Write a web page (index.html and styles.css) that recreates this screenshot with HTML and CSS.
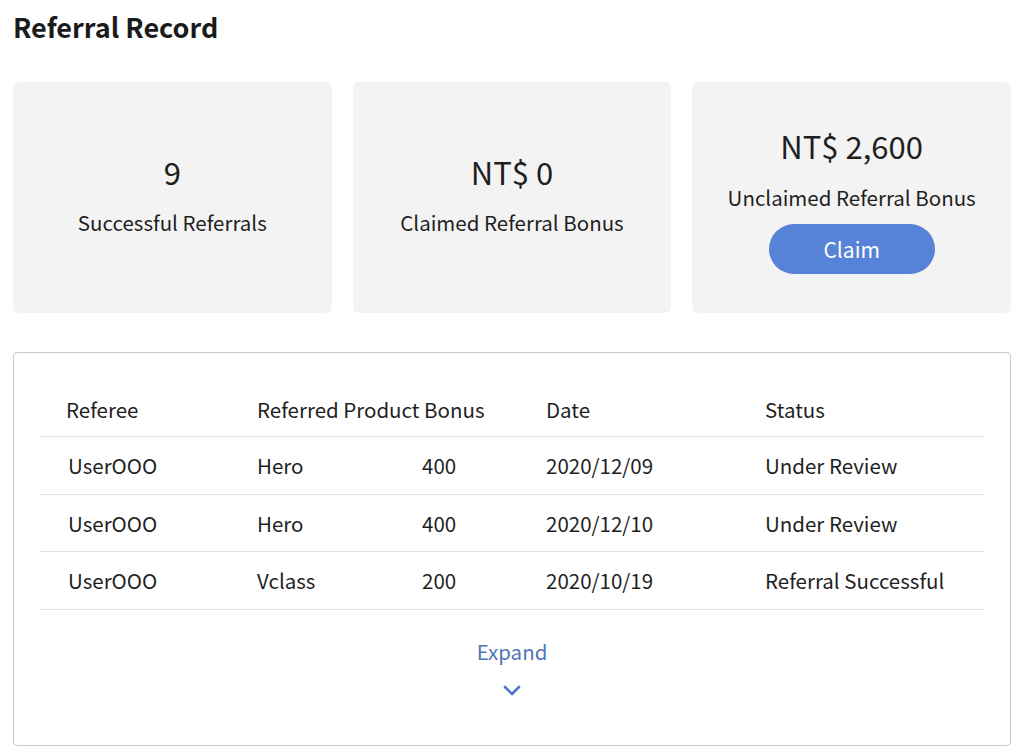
FILE: index.html
```html
<!DOCTYPE html>
<html lang="en">
<head>
  <meta charset="UTF-8" />
  <title>Referral Record</title>
  <link rel="stylesheet" href="styles.css">
</head>
<body>
  <div class="page">
    <h1 class="title">Referral Record</h1>

    <div class="stats">
      <div class="stat-card">
        <div class="stat-value">9</div>
        <div class="stat-label">Successful Referrals</div>
      </div>
      <div class="stat-card">
        <div class="stat-value">NT$ 0</div>
        <div class="stat-label">Claimed Referral Bonus</div>
      </div>
      <div class="stat-card unclaimed">
        <div class="stat-value">NT$ 2,600</div>
        <div class="stat-label">Unclaimed Referral Bonus</div>
        <button class="claim-btn">Claim</button>
      </div>
    </div>

    <div class="record-box">
      <div class="record-table">
        <div class="row head">
          <div>Referee</div>
          <div class="product-head">Referred Product Bonus</div>
          <div>Date</div>
          <div>Status</div>
        </div>
        <div class="row">
          <div class="user">UserOOO</div>
          <div>Hero</div>
          <div>400</div>
          <div>2020/12/09</div>
          <div>Under Review</div>
        </div>
        <div class="row">
          <div class="user">UserOOO</div>
          <div>Hero</div>
          <div>400</div>
          <div>2020/12/10</div>
          <div>Under Review</div>
        </div>
        <div class="row">
          <div class="user">UserOOO</div>
          <div>Vclass</div>
          <div>200</div>
          <div>2020/10/19</div>
          <div>Referral Successful</div>
        </div>
      </div>

      <div class="expand">
        <span class="expand-text">Expand</span>
        <svg class="chevron" width="18" height="12" viewBox="0 0 18 12">
          <path d="M2 2 L9 9 L16 2" fill="none" stroke="#4f79c4" stroke-width="2.6" stroke-linecap="round" stroke-linejoin="round" />
        </svg>
      </div>
    </div>
  </div>
</body>
</html>
```

FILE: styles.css
```css
body {
  margin: 0;
  background-color: #fff;
  font-family: "Noto Sans CJK TC", "Noto Sans", Arial, sans-serif;
  color: #1f1f1f;
}

.page {
  padding: 0 13px;
}

.title {
  margin: 0;
  padding-top: 8px;
  font-size: 27px;
  line-height: 38px;
  font-weight: 700;
  color: #1a1a1a;
}

.stats {
  display: grid;
  grid-template-columns: 1fr 1fr 1fr;
  gap: 21px;
  margin-top: 36px;
}

.stat-card {
  background-color: #f3f3f3;
  border-radius: 6px;
  height: 231px;
  padding-bottom: 6px;
  display: flex;
  flex-direction: column;
  align-items: center;
  justify-content: center;
  box-sizing: border-box;
}

.stat-value {
  font-size: 31px;
  line-height: 40px;
}

.stat-label {
  font-size: 20.5px;
  line-height: 30px;
  margin-top: 15px;
}

.stat-card.unclaimed {
  padding-top: 12px;
  padding-bottom: 8px;
}

.stat-card.unclaimed .stat-label {
  margin-top: 16px;
}

.claim-btn {
  margin-top: 12px;
  width: 166px;
  height: 50px;
  border: none;
  border-radius: 25px;
  background-color: #5682d7;
  color: #fff;
  font-family: inherit;
  font-size: 21px;
}

.record-box {
  margin-top: 39px;
  border: 1px solid #c9c9c9;
  border-radius: 4px;
  height: 394px;
  box-sizing: border-box;
  padding: 22px 26px 0;
}

.row {
  display: grid;
  grid-template-columns: 191px 165px 124px 219px 1fr;
  padding-left: 26px;
  height: 57.5px;
  box-sizing: border-box;
  align-items: center;
  border-bottom: 1.5px solid #e2e2e2;
  font-size: 20.5px;
}

.row .user {
  padding-left: 2px;
}

.row.head {
  height: 62px;
  padding-top: 7px;
}

.product-head {
  grid-column: span 2;
}

.expand {
  display: flex;
  flex-direction: column;
  align-items: center;
  padding-top: 26px;
}

.expand-text {
  font-size: 20.5px;
  line-height: 30px;
  color: #4f76b8;
}

.chevron {
  margin-top: 19px;
}
```
